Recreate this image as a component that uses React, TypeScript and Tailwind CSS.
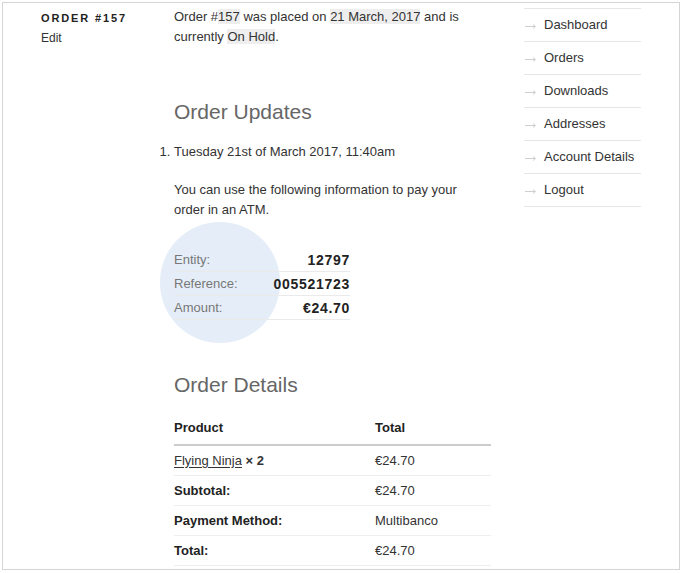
import React from "react";

const nav = ["Dashboard", "Orders", "Downloads", "Addresses", "Account Details", "Logout"];

function Arrow() {
  return (
    <svg width="20" height="10" viewBox="0 0 20 10" className="shrink-0 mt-[2px]">
      <path d="M1 5.5H11" stroke="#cfcfcf" strokeWidth="1" fill="none" />
      <path d="M9 3.5L11.5 5.5L9 7.5" stroke="#cfcfcf" strokeWidth="1" fill="none" />
    </svg>
  );
}

export default function App() {
  return (
    <div className="w-[683px] h-[573px] bg-white p-[2px] text-[#333] text-[13px] leading-[20px]" style={{ fontFamily: '"Liberation Sans", Arial, sans-serif' }}>
      <div className="w-[678px] h-[568px] border border-[#d4d4d4] overflow-hidden flex">
        {/* left column */}
        <div className="w-[171px] pl-[38px] pt-[7px] shrink-0">
          <div className="text-[11px] font-bold tracking-[0.17em] leading-[16px] text-[#222]">ORDER #157</div>
          <div className="text-[12px] leading-[16px] mt-[4px]">Edit</div>
        </div>
        {/* main column */}
        <div className="w-[317px] shrink-0 pt-[4px]">
          <p className="w-[305px]">
            Order #<mark className="bg-[#eee] text-[#333]">157</mark> was placed on <mark className="bg-[#eee] text-[#333]">21 March, 2017</mark> and is currently <mark className="bg-[#eee] text-[#333]">On Hold</mark>.
          </p>
          <h2 className="mt-[50px] text-[21px] leading-[30px] font-light text-[#666]">Order Updates</h2>
          <ol className="mt-[15px] list-decimal list-outside pl-0">
            <li>Tuesday 21st of March 2017, 11:40am</li>
          </ol>
          <p className="mt-[18px] w-[305px]">You can use the following information to pay your order in an ATM.</p>
          <div className="relative mt-[28px] w-[176px]">
            <div className="absolute left-[-14px] top-[-26px] w-[120px] h-[121px] rounded-full bg-[#e5eef8]"></div>
            <div className="relative">
              {[
                ["Entity:", "12797"],
                ["Reference:", "005521723"],
                ["Amount:", "€24.70"],
              ].map(([l, v]) => (
                <div key={l} className="flex justify-between h-[24px] items-center border-b border-[#eaeaea]">
                  <span className="text-[#777]">{l}</span>
                  <span className="font-bold text-[14px] tracking-[0.05em] text-[#222]">{v}</span>
                </div>
              ))}
            </div>
          </div>
          <h2 className="mt-[50px] text-[21px] leading-[30px] font-light text-[#666]">Order Details</h2>
          <div className="mt-[11px]">
            <div className="flex h-[35px] items-center border-b-2 border-[#ccc] font-bold text-[#222]">
              <div className="w-[201px]">Product</div>
              <div>Total</div>
            </div>
            <div className="flex h-[30px] items-center border-b border-[#eee]">
              <div className="w-[201px]"><span className="underline underline-offset-2">Flying Ninja</span> <span className="font-bold">× 2</span></div>
              <div>€24.70</div>
            </div>
            <div className="flex h-[30px] items-center border-b border-[#eee]">
              <div className="w-[201px] font-bold text-[#222]">Subtotal:</div>
              <div>€24.70</div>
            </div>
            <div className="flex h-[30px] items-center border-b border-[#eee]">
              <div className="w-[201px] font-bold text-[#222]">Payment Method:</div>
              <div>Multibanco</div>
            </div>
            <div className="flex h-[30px] items-center border-b border-[#eee]">
              <div className="w-[201px] font-bold text-[#222]">Total:</div>
              <div>€24.70</div>
            </div>
          </div>
        </div>
        {/* nav */}
        <div className="ml-[33px] w-[117px] shrink-0 pt-[5px]">
          <ul className="border-t border-[#e6e6e6]">
            {nav.map((n) => (
              <li key={n} className="h-[33px] border-b border-[#e6e6e6] flex items-center whitespace-nowrap">
                <Arrow />
                <span>{n}</span>
              </li>
            ))}
          </ul>
        </div>
      </div>
    </div>
  );
}
